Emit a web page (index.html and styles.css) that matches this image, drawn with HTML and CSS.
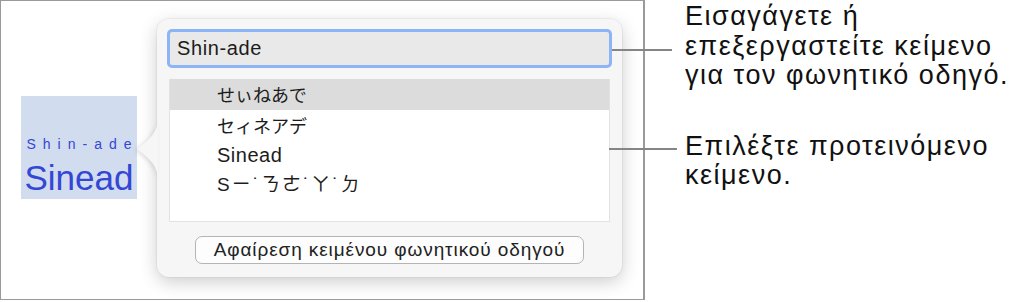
FILE: index.html
```html
<!DOCTYPE html>
<html lang="el">
<head>
    <meta charset="UTF-8">
    <meta name="viewport" content="width=device-width, initial-scale=1.0">
    <title>Φωνητικός οδηγός</title>
    <link rel="stylesheet" href="styles.css">
</head>
<body>
    <div class="figure">
        <div class="frame">
            <div class="term">
                <div class="term-ruby">Shin-ade</div>
                <div class="term-base">Sinead</div>
            </div>

            <div class="popover">
                <svg class="popover-arrow" width="21" height="62" viewBox="0 0 21 62">
                    <path d="M21 0 C21 14 13 21 2 29.5 Q0 31 2 32.5 C13 41 21 48 21 62 Z" fill="#f6f6f6"/>
                </svg>
                <div class="field">Shin-ade</div>
                <div class="list">
                    <div class="list-row selected jp">せぃねあで</div>
                    <div class="list-row jp">セィネアデ</div>
                    <div class="list-row">Sinead</div>
                    <div class="list-row tw">Sㄧ˙ㄋㄜ˙ㄚ˙ㄉ</div>
                </div>
                <div class="actions">
                    <div class="button">Αφαίρεση κειμένου φωνητικού οδηγού</div>
                </div>
            </div>
        </div>

        <div class="notes">
            <p class="note">Εισαγάγετε ή<br>επεξεργαστείτε κείμενο<br>για τον φωνητικό οδηγό.</p>
            <p class="note">Επιλέξτε προτεινόμενο<br>κείμενο.</p>
        </div>

        <div class="leader leader-field"></div>
        <div class="leader leader-list"></div>
    </div>
</body>
</html>
```

FILE: styles.css
```css
body {
    margin: 0;
    background: white;
    font-family: "Liberation Sans", Arial, "Noto Sans CJK JP", sans-serif;
    color: #1c1c1c;
}
.figure {
    position: relative;
    display: flex;
    width: 1009px;
    height: 302px;
}
.frame {
    box-sizing: border-box;
    width: 645px;
    height: 300px;
    border: 1px solid #9a9a9a;
    border-right-width: 2px;
    display: flex;
    align-items: flex-start;
    padding: 18px 0 0 20px;
}
.term {
    box-sizing: border-box;
    width: 116px;
    height: 103px;
    margin-top: 77px;
    padding-top: 40px;
    background: #d1dcee;
    color: #3446d6;
    text-align: center;
}
.term-ruby {
    font-size: 14px;
    line-height: 16px;
    letter-spacing: 7px;
    margin-right: -7px;
}
.term-base {
    font-size: 35px;
    line-height: 38px;
    margin-top: 7px;
}
.popover {
    position: relative;
    box-sizing: border-box;
    width: 465px;
    height: 258px;
    margin-left: 20px;
    padding: 10px;
    background: #f6f6f6;
    border-radius: 12px;
    box-shadow: 0 0 0 1px rgba(0,0,0,0.04), 0 5px 18px rgba(0,0,0,0.2);
}
.popover-arrow {
    position: absolute;
    left: -20px;
    top: 99px;
    filter: drop-shadow(-2px 1px 2px rgba(0,0,0,0.12));
}
.field {
    box-sizing: border-box;
    height: 39px;
    padding-left: 7px;
    border: 3px solid #8cb4f6;
    border-radius: 5px;
    background: #e9e9e9;
    font-size: 20px;
    letter-spacing: 0.6px;
    line-height: 33px;
}
.list {
    box-sizing: border-box;
    height: 143px;
    margin: 11px 2px 0;
    background: white;
    border: 1px solid #e2e2e2;
}
.list-row {
    height: 30px;
    padding-left: 47px;
    font-size: 20px;
    letter-spacing: 0.5px;
    line-height: 30px;
}
.list-row.selected {
    height: 31px;
    margin-top: -1px;
    line-height: 31px;
    background: #dcdcdc;
}
.jp {
    font-family: "Noto Sans CJK JP", sans-serif;
    font-size: 18px;
    letter-spacing: 0;
}
.tw {
    font-family: "Liberation Sans", "Noto Sans CJK TC", sans-serif;
    font-size: 19px;
    letter-spacing: 2px;
}
.actions {
    display: flex;
    justify-content: center;
    margin-top: 14px;
}
.button {
    box-sizing: border-box;
    width: 389px;
    height: 28px;
    border: 1px solid #b4b4b4;
    border-radius: 7px;
    background: #fdfdfd;
    font-size: 19px;
    letter-spacing: 0.9px;
    line-height: 26px;
    text-align: center;
    color: #222;
}
.notes {
    padding: 2px 0 0 40px;
}
.note {
    margin: 0 0 41px;
    font-size: 27px;
    letter-spacing: 1.5px;
    line-height: 29.5px;
    color: #111;
}
.leader {
    position: absolute;
    height: 2px;
    background: #858585;
}
.leader-field {
    left: 612px;
    top: 49px;
    width: 60px;
}
.leader-list {
    left: 609px;
    top: 148px;
    width: 68px;
}
```
